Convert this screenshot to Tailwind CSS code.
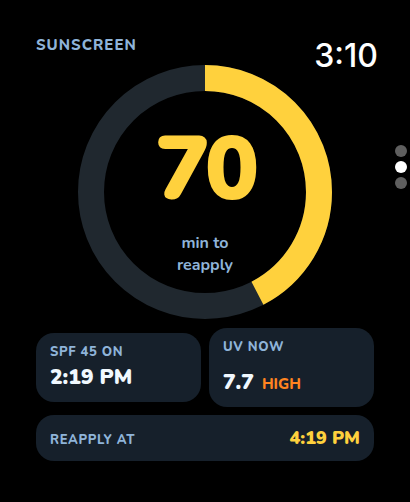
<!DOCTYPE html>
<html lang="en">
<head>
<meta charset="utf-8">
<meta name="viewport" content="width=device-width, initial-scale=1">
<title>Sunscreen</title>
<script src="https://cdn.jsdelivr.net/npm/@tailwindcss/browser@4"></script>
</head>
<body class="relative min-h-screen bg-black font-['Nunito','Open_Sans',sans-serif] text-[#8fb4d9]">
<time class="absolute right-8 top-10 font-['Inter',sans-serif] text-[32px] leading-8 font-medium text-white">3:10</time>
<div class="absolute right-[3px] top-[145px] flex flex-col gap-1" aria-hidden="true">
  <span class="size-3 rounded-full bg-[#5f5f5f]"></span>
  <span class="size-3 rounded-full bg-white"></span>
  <span class="size-3 rounded-full bg-[#5f5f5f]"></span>
</div>
<main class="flex flex-col px-9 pt-[35px]">
  <h1 class="pb-[10px] text-[15px] leading-5 font-extrabold tracking-[1px]">SUNSCREEN</h1>
  <section class="grid place-items-center" aria-label="Time left">
    <svg class="col-start-1 row-start-1 size-[254px]" viewBox="0 0 254 254" aria-hidden="true">
      <circle cx="127" cy="127" r="114" fill="none" stroke="#20282f" stroke-width="26"/>
      <circle cx="127" cy="127" r="114" fill="none" stroke="#ffd13d" stroke-width="26" pathLength="360" stroke-dasharray="152.6 360" transform="rotate(-90 127 127)"/>
    </svg>
    <div class="col-start-1 row-start-1 flex flex-col items-center text-center">
      <p class="text-[90px] leading-[124px] font-black tracking-tighter text-[#ffd13d]">70</p>
      <p class="text-[16px] leading-[22px] font-bold">min to<br>reapply</p>
    </div>
  </section>
  <section class="grid grid-cols-2 items-center gap-2 pt-[9px]">
    <div class="rounded-[18px] bg-[#16202b] px-[14px] pt-[9px] pb-[10px]">
      <h2 class="text-[13px] leading-5 font-extrabold tracking-wider">SPF 45 ON</h2>
      <p class="text-[21px] leading-[30px] font-black text-[#f0f8ff]">2:19 PM</p>
    </div>
    <div class="rounded-[18px] bg-[#16202b] px-[14px] pt-[9px] pb-[10px]">
      <h2 class="pb-[10px] text-[13px] leading-5 font-extrabold tracking-wider">UV NOW</h2>
      <p class="flex items-baseline gap-2 text-[21px] leading-[30px] font-black text-[#f0f8ff]">7.7 <span class="text-[15px] leading-5 font-extrabold text-[#ff8420]">HIGH</span></p>
    </div>
    <div class="col-span-2 flex items-center justify-between rounded-[18px] bg-[#16202b] px-[14px] py-2">
      <h2 class="pt-1 text-[13px] leading-5 font-extrabold tracking-wider">REAPPLY AT</h2>
      <p class="text-[18px] leading-[30px] font-black text-[#ffd13d]">4:19 PM</p>
    </div>
  </section>
</main>
</body>
</html>
